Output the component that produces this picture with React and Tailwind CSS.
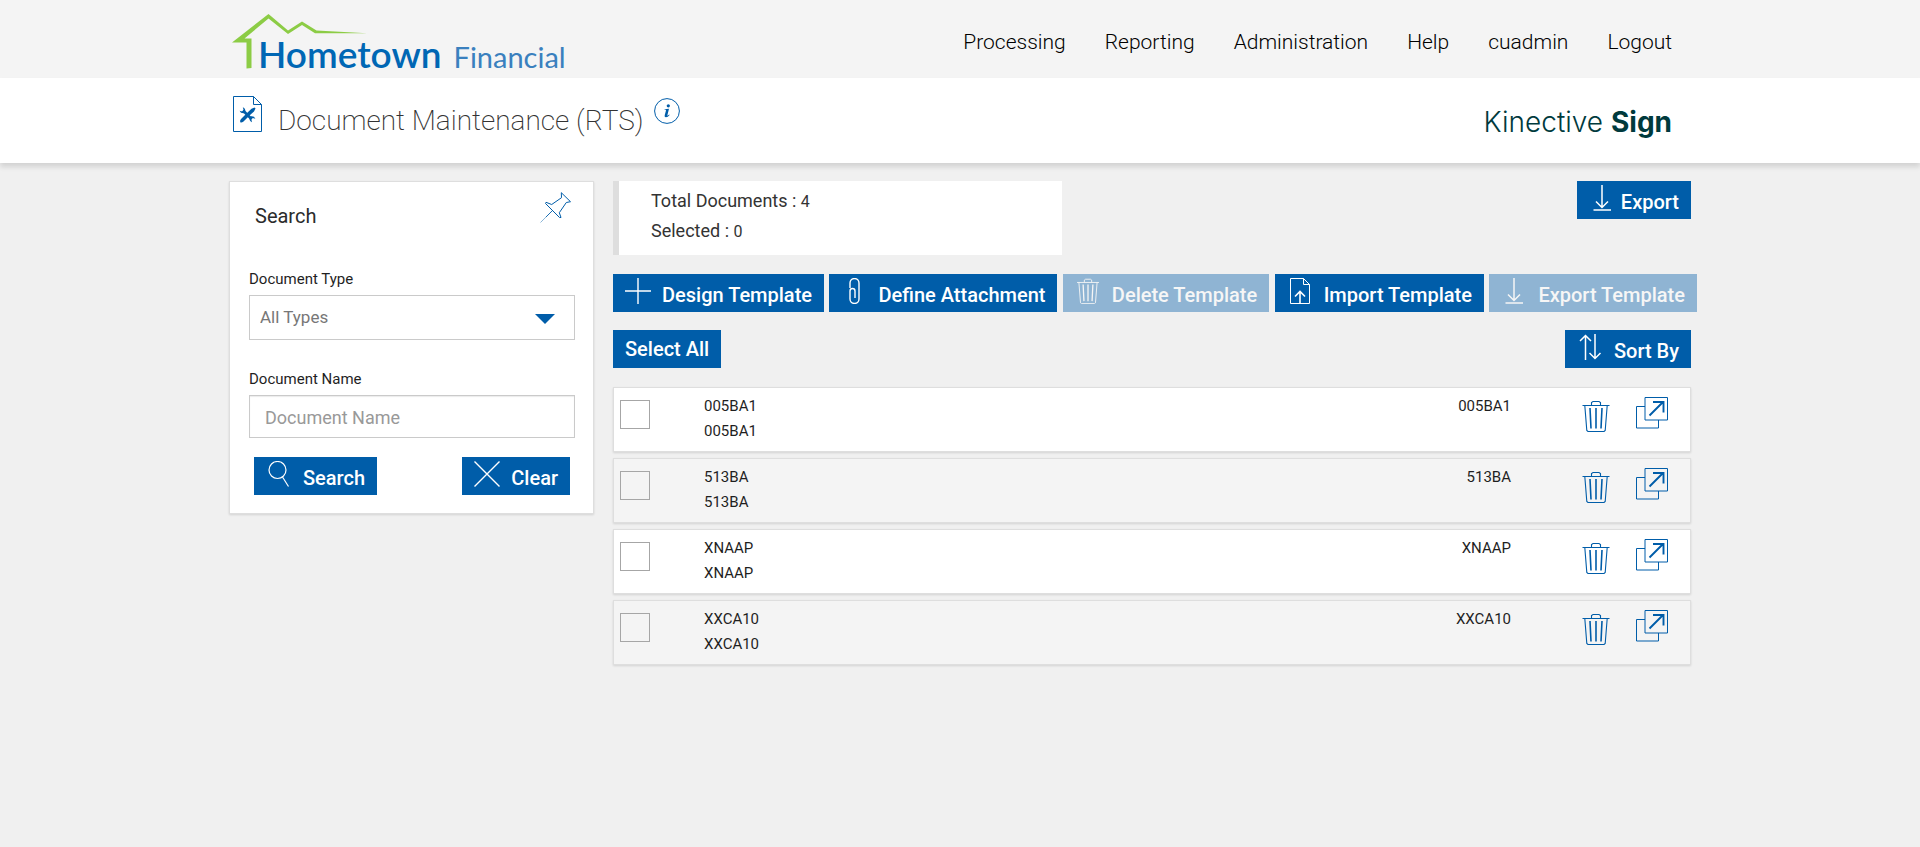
import React from "react";

const NAV = ["Processing", "Reporting", "Administration", "Help", "cuadmin", "Logout"];
const ROWS = ["005BA1", "513BA", "XNAAP", "XXCA10"];

function Svg({ className, viewBox, children }) {
  return (
    <svg className={className} viewBox={viewBox} fill="none" stroke="currentColor" strokeWidth="1.2" aria-hidden="true">
      {children}
    </svg>
  );
}

const PlusIcon = () => (
  <Svg className="h-[26px] w-[26px]" viewBox="0 0 26 26"><path d="M13 0v26M0 13h26" strokeWidth="1.4" /></Svg>
);
const ClipIcon = () => (
  <Svg className="h-[26px] w-[26px]" viewBox="0 0 26 26">
    <path d="M9 10V5a4.500 4.500 0 0 1 9 0V21a4.500 4.500 0 0 1-9 0V13a2.500 2.500 0 0 1 5 0V20" strokeWidth="1.4" />
  </Svg>
);
const TrashIcon = ({ className = "h-[26px] w-[26px]" }) => (
  <Svg className={className} viewBox="0 0 28 32">
    <path d="M0.500 5.500h27M9.500 5.500V2.500l1.500-1h6l1.500 1v3M2.800 5.500l2 25 1.200 1h16l1.200-1 2-25" strokeWidth="1.100" />
    <path d="M8 8l1 20.500M14 8v20.500M20 8l-1 20.500" strokeWidth="1.600" />
  </Svg>
);
const ImportIcon = () => (
  <Svg className="h-[26px] w-[26px]" viewBox="0 0 26 26">
    <path d="M3.500.500h13l6 6v19h-19zM16.500.500v6h6" strokeWidth="1" />
    <path d="M13 25.500V13.500M8 18.500l5-5 5 5" strokeWidth="1.600" />
  </Svg>
);
const DownIcon = () => (
  <Svg className="h-[26px] w-[26px]" viewBox="0 0 26 26">
    <path d="M13 0v22M7 16.500l6 6 6-6M4.500 25h17.500" strokeWidth="1.500" />
  </Svg>
);
const SortIcon = () => (
  <Svg className="h-[26px] w-[26px]" viewBox="0 0 26 26">
    <path d="M8.500 26V1.500M3 7l5.500-5.500L14 7M18 0v24.500M12.500 19l5.500 5.500 5.500-5.500" strokeWidth="1.500" />
  </Svg>
);
const SearchIcon = () => (
  <Svg className="h-[26px] w-[26px]" viewBox="0 0 26 26">
    <circle cx="11.500" cy="9" r="8.500" />
    <path d="M16.500 16l6 9.500" />
  </Svg>
);
const CloseIcon = () => (
  <Svg className="h-[26px] w-[26px]" viewBox="0 0 26 26"><path d="M.5.5l25 25M25.500.500l-25 25" strokeWidth="1.400" /></Svg>
);
const OpenIcon = () => (
  <Svg className="h-8 w-8" viewBox="0 0 32 32">
    <path d="M9 9.500H.5v21.500h22V23" strokeWidth="1" />
    <path d="M9 .5h22.500V23H9z" strokeWidth="1" />
    <path d="M13.500 18.500L27 5M17 5h10.500v10.500" strokeWidth="1.900" />
  </Svg>
);

function Button({ icon, gap = "gap-[11px]", disabled, children }) {
  return (
    <button
      type="button"
      disabled={disabled}
      className={`flex h-[38px] shrink-0 items-start bg-[#005da9] px-3 text-xl font-medium text-white disabled:opacity-40 ${gap}`}
    >
      {icon && <span className="pt-1">{icon}</span>}
      <span className={icon ? "leading-[42px]" : "leading-[38px]"}>{children}</span>
    </button>
  );
}

function Logo() {
  return (
    <a href="#home" aria-label="Hometown Financial" className="relative flex h-[78px] items-baseline gap-3 pl-[27px]">
      <svg className="absolute top-[14px] left-0 h-[56px] w-[140px]" viewBox="0 0 140 56" fill="#8ccc45" aria-hidden="true">
        <path d="M1 28.500L37.500 0L57 16.500L71 7.500L85.500 16.500L136 19.300L84 19.300L71 11L57 20L37.500 4.500L13.500 24.500H20.500V54L15.500 54.500V28.500z" />
      </svg>
      <span className="font-[Lato] text-[37px] leading-[108px] font-semibold text-[#0067b4]">Hometown</span>
      <span className="font-[Lato] text-[29px] font-normal text-[#3a80be]">Financial</span>
    </a>
  );
}

function Row({ name, id }) {
  return (
    <li className="flex h-[65px] items-start border border-[#dedede] bg-white pl-[6px] shadow-[0_1px_2px_rgba(0,0,0,0.12)] even:bg-[#f4f4f4]">
      <input
        id={id}
        type="checkbox"
        aria-label={name}
        className="mt-3 h-[29px] w-[30px] appearance-none border border-[#a6a6a6] bg-transparent checked:bg-[#005da9]"
      />
      <label htmlFor={id} className="ml-[54px] pt-[6px] text-[15px] leading-[25px] text-[#1f1f1f]">
        <span className="block">{name}</span>
        <span className="block">{name}</span>
      </label>
      <span className="ml-auto pt-[6px] text-[15px] leading-[25px] text-[#1f1f1f]">{name}</span>
      <button type="button" aria-label="Delete" className="mt-3 ml-[71px] text-[#005da9]">
        <TrashIcon className="h-8 w-7" />
      </button>
      <button type="button" aria-label="Open" className="mt-[9px] mr-[22px] ml-[26px] text-[#005da9]">
        <OpenIcon />
      </button>
    </li>
  );
}

export default function App() {
  return (
    <div className="min-h-screen bg-[#f0f0f0] font-[Roboto,sans-serif] text-[#1f1f1f]">
      <header className="bg-[#f4f4f4]">
        <div className="mx-auto flex h-[78px] max-w-[1462px] items-center justify-between pr-[19px] pl-[2px]">
          <Logo />
          <nav className="flex gap-[39px] pt-2 text-[21px] font-light text-black">
            {NAV.map((n) => (
              <a key={n} href={`#${n}`}>{n}</a>
            ))}
          </nav>
        </div>
      </header>
      <div className="bg-white shadow-[0_4px_5px_rgba(0,0,0,0.12)]">
        <div className="mx-auto flex h-[85px] max-w-[1462px] items-start pr-[19px] pl-1">
          <svg className="mt-[18px] h-9 w-[29px] shrink-0" viewBox="0 0 29 36" fill="none" stroke="#005da9" aria-hidden="true">
            <path d="M.5.5h20l8 8v27H.5zM20.500.5v8h8" />
            <path d="M10 14.500L18.500 23" strokeWidth="2.600" />
            <path d="M21.500 11.500L22.500 12.500L21 15.500L16.500 19.500L10.500 25.500Q8.500 27 7.300 26.200Q6.500 25 8 23L14 17L18.500 12.800z" fill="#005da9" stroke="none" />
            <path d="M9.800 11.200Q12.800 12.500 12.300 16L11 17.300Q7.500 17.500 6.600 14.800L9.300 15.500L10.600 14z" fill="#005da9" stroke="none" />
            <path d="M19 26.300Q16.200 25 16.500 22L18 20.300Q21.500 20 22.300 22.700L19.700 22L18.400 23.500z" fill="#005da9" stroke="none" />
          </svg>
          <h1 className="ml-4 pt-[23px] text-[28px] leading-[40px] font-extralight text-[#333]">Document Maintenance (RTS)</h1>
          <button type="button" aria-label="Information" className="mt-5 ml-[10px]">
            <svg className="h-[26px] w-[26px]" viewBox="0 0 26 26" fill="none" aria-hidden="true">
              <circle cx="13" cy="13" r="12.400" stroke="#005da9" />
              <circle cx="14.300" cy="7.800" r="1.600" fill="#005da9" />
              <path d="M10.300 11.200L15 10.800L13.300 17.600q.6.200 1.900-1.100l.4.500q-2 2.500-3.800 2.300q-1.600-.2-1.100-2l1.300-4.800q.2-1-1.700-1z" fill="#005da9" />
            </svg>
          </button>
          <p className="ml-auto pt-6 font-[Inter] text-[28px] leading-[40px] font-light text-[#003a3d]">
            Kinective <b className="font-bold">Sign</b>
          </p>
        </div>
      </div>

      <main className="mx-auto flex max-w-[1462px] items-start gap-[19px] pt-[18px]">
        <form className="w-[365px] shrink-0 border border-[#dedede] bg-white pr-[18px] pb-[18px] pl-[19px] shadow-[0_1px_2px_rgba(0,0,0,0.12)]">
          <div className="flex items-start justify-between pt-[10px] pr-1 pl-[6px]">
            <h2 className="pt-[9px] text-xl leading-[30px] text-[#2b2b2b]">Search</h2>
            <button type="button" aria-label="Pin" className="text-[#005da9]">
              <Svg className="h-8 w-8" viewBox="0 0 32 32">
                <path d="M22.300 .7L31.500 9.700L27.300 10.500L20.300 20.700L22 25.500L20.500 25.500L6.500 11.500L7 10.300L12.700 12.500L22.500 5.700z" strokeWidth="1" />
                <path d="M13.500 18.500L7 25" strokeWidth=".9" />
                <path d="M7 25L1.500 30.500" strokeWidth=".9" opacity=".5" />
              </Svg>
            </button>
          </div>
          <label htmlFor="doctype" className="mt-[38px] block text-[15px] leading-5">Document Type</label>
          <div className="relative mt-[6px]">
            <select id="doctype" className="h-[45px] w-full appearance-none border border-[#cacaca] bg-white px-[10px] text-[17px] text-[#777]">
              <option>All Types</option>
            </select>
            <svg className="pointer-events-none absolute top-[19px] right-[20px] h-[10px] w-5" viewBox="0 0 20 10" fill="#005da9" aria-hidden="true">
              <path d="M0 0h20L10 10z" />
            </svg>
          </div>
          <label htmlFor="docname" className="mt-[29px] block text-[15px] leading-5">Document Name</label>
          <input
            id="docname"
            type="text"
            placeholder="Document Name"
            className="mt-[6px] h-[43px] w-full border border-[#cacaca] bg-white px-[15px] pt-[2px] text-lg shadow-[inset_0_1px_1px_rgba(0,0,0,0.08)] placeholder:text-[#999]"
          />
          <div className="mt-[19px] flex justify-between pr-[5px] pl-[5px]">
            <Button icon={<SearchIcon />}>Search</Button>
            <Button icon={<CloseIcon />}>Clear</Button>
          </div>
        </form>

        <section className="min-w-0 flex-1">
          <div className="flex items-start justify-between">
            <div className="w-[449px] border-l-6 border-[#dedede] bg-white pt-[5px] pb-[9px] pl-8 text-lg leading-[30px] text-[#333]">
              <p>Total Documents : <span className="text-base">4</span></p>
              <p>Selected : <span className="text-base">0</span></p>
            </div>
            <Button icon={<DownIcon />} gap="gap-[6px]">Export</Button>
          </div>
          <div className="mt-[19px] -mr-[6px] flex justify-between">
            <Button icon={<PlusIcon />}>Design Template</Button>
            <Button icon={<ClipIcon />}>Define Attachment</Button>
            <Button icon={<TrashIcon />} disabled>Delete Template</Button>
            <Button icon={<ImportIcon />}>Import Template</Button>
            <Button icon={<DownIcon />} disabled>Export Template</Button>
          </div>
          <div className="mt-[18px] flex justify-between">
            <Button>Select All</Button>
            <Button icon={<SortIcon />}>Sort By</Button>
          </div>
          <ul className="mt-[19px] flex flex-col gap-[6px]">
            {ROWS.map((r) => (
              <Row key={r} name={r} id={`doc-${r}`} />
            ))}
          </ul>
        </section>
      </main>
    </div>
  );
}
